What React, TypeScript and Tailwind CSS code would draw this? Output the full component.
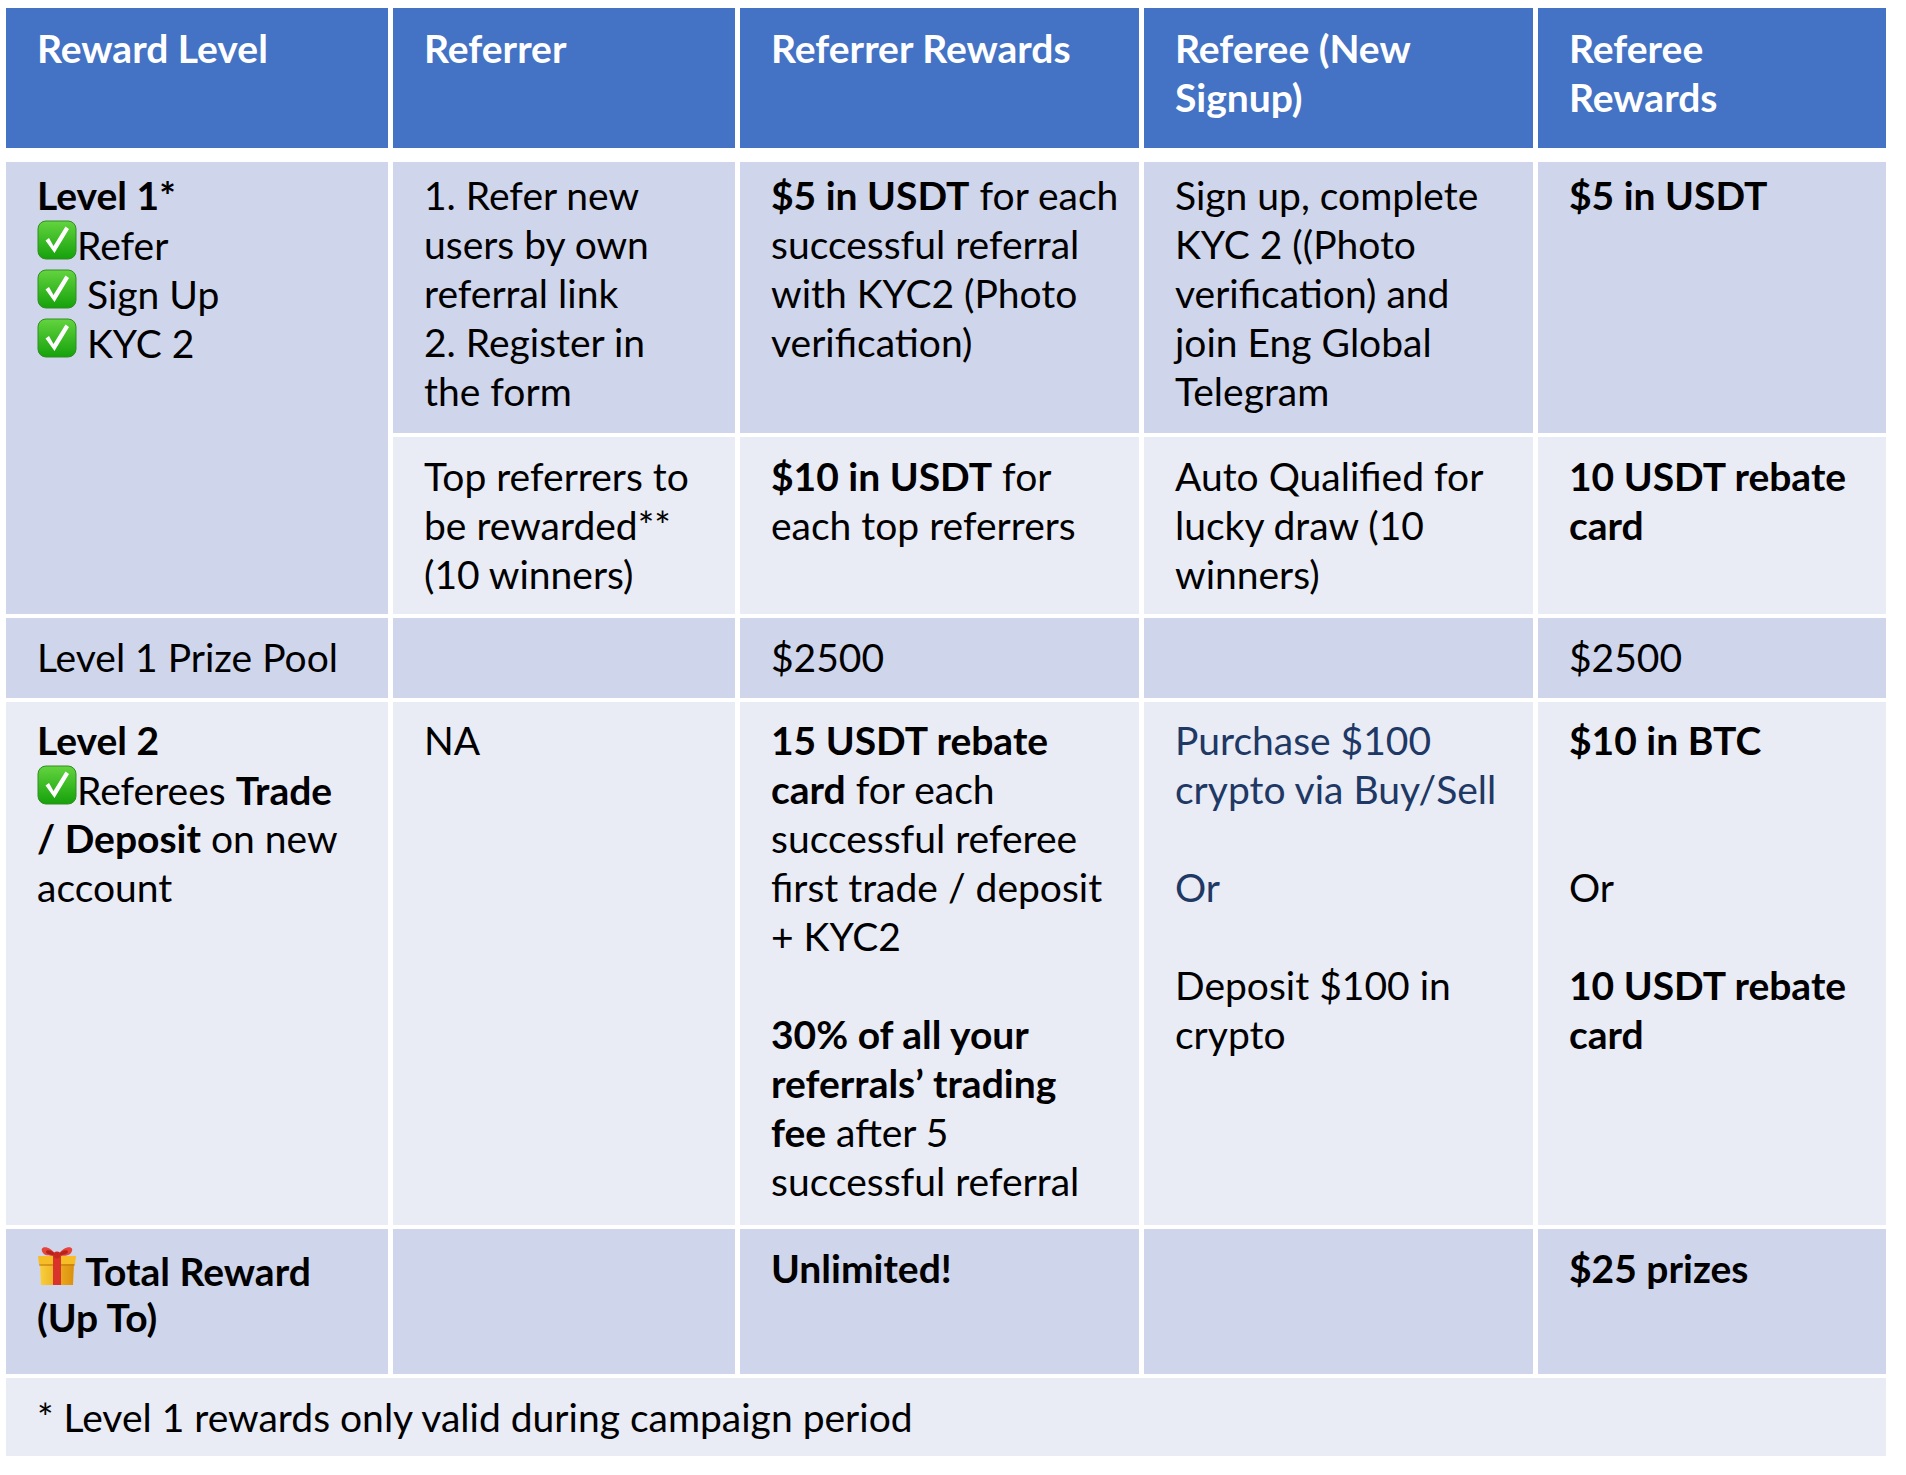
import React from "react";

const Check = () => (
  <svg width="40" height="40" viewBox="0 0 40 40" className="inline-block align-baseline">
    <defs>
      <linearGradient id="gck" x1="0" y1="0" x2="0" y2="1">
        <stop offset="0" stopColor="#63d43f" />
        <stop offset="1" stopColor="#15a10b" />
      </linearGradient>
    </defs>
    <rect x="1" y="1" width="38" height="38" rx="8" fill="url(#gck)" stroke="#2f8f1f" strokeWidth="1" />
    <path d="M8.5 20.5 L12 18 L16.5 26 L28.5 6.5 L32 9 L17.5 33 Z" fill="#ffffff" />
  </svg>
);

const Gift = () => (
  <svg width="40" height="42" viewBox="0 0 40 42" className="inline-block align-baseline">
    <defs>
      <linearGradient id="ggb" x1="0" y1="0" x2="1" y2="0">
        <stop offset="0" stopColor="#f9cf3a" />
        <stop offset="1" stopColor="#dd8f0c" />
      </linearGradient>
    </defs>
    <path d="M3 19 L37 19 L36 41 L4 41 Z" fill="url(#ggb)" />
    <path d="M1 12 L39 12 L38 20 L2 20 Z" fill="#f6bd27" />
    <path d="M2 20 L38 20 L37.6 22 L2.4 22 Z" fill="#c47a0a" opacity="0.6" />
    <rect x="16" y="12" width="8" height="29" fill="#d8342b" />
    <path d="M20 12 C12 0 1 2 6 9 C8 12 14 12 20 12 Z" fill="#e4443a" />
    <path d="M20 12 C28 0 39 2 34 9 C32 12 26 12 20 12 Z" fill="#e4443a" />
    <path d="M20 12 C16 6 9 5 9 8 C9 10 14 11 20 12 Z" fill="#b8221b" />
    <path d="M20 12 C24 6 31 5 31 8 C31 10 26 11 20 12 Z" fill="#b8221b" />
    <circle cx="20" cy="11" r="3.4" fill="#c9281f" />
  </svg>
);

type Line = React.ReactNode;

const Cell = ({ bg, pt, lines, extra }: { bg: string; pt: string; lines: Line[]; extra?: string }) => (
  <div className={`${bg} ${pt} pl-[31px] ${extra ?? ""}`}>
    {lines.map((l, i) => (
      <div key={i} className="h-[49px] whitespace-nowrap">
        {l === "" ? "\u00a0" : l}
      </div>
    ))}
  </div>
);

const B = ({ children }: { children: React.ReactNode }) => <span className="font-bold">{children}</span>;
const Blue = ({ children }: { children: React.ReactNode }) => <span className="text-[#203864]">{children}</span>;

const D = "bg-[#CFD5EA]";
const L = "bg-[#E9EBF5]";

export default function App() {
  return (
    <div className="min-h-[1475px] w-[1906px] bg-white pl-[6px] pt-[8px] font-['Lato',sans-serif] text-[39px] leading-[49px] text-black">
      <div className="mb-[14px] grid h-[140px] grid-cols-[382px_342px_399px_389px_348px] gap-x-[5px]">
        {[
          ["Reward Level"],
          ["Referrer"],
          ["Referrer Rewards"],
          ["Referee (New", "Signup)"],
          ["Referee", "Rewards"],
        ].map((h, i) => (
          <Cell key={i} bg="bg-[#4472C4]" pt="pt-[16px]" extra="font-bold text-white" lines={h} />
        ))}
      </div>

      <div className="grid grid-cols-[382px_342px_399px_389px_348px] grid-rows-[271px_177px_80px_523px_145px_78px] gap-x-[5px] gap-y-[4px]">
        {/* Row 1a */}
        <Cell
          bg={D}
          pt="pt-[9px]"
          extra="row-span-2"
          lines={[
            <B>Level 1*</B>,
            <>
              <Check />
              Refer
            </>,
            <>
              <Check /> Sign Up
            </>,
            <>
              <Check /> KYC 2
            </>,
          ]}
        />
        <Cell bg={D} pt="pt-[9px]" lines={["1. Refer new", "users by own", "referral link", "2. Register in", "the form"]} />
        <Cell
          bg={D}
          pt="pt-[9px]"
          lines={[
            <>
              <B>$5 in USDT</B> for each
            </>,
            "successful referral",
            "with KYC2 (Photo",
            "verification)",
          ]}
        />
        <Cell
          bg={D}
          pt="pt-[9px]"
          lines={["Sign up, complete", "KYC 2 ((Photo", "verification) and", "join Eng Global", "Telegram"]}
        />
        <Cell bg={D} pt="pt-[9px]" lines={[<B>$5 in USDT</B>]} />

        {/* Row 1b */}
        <Cell bg={L} pt="pt-[15px]" lines={["Top referrers to", "be rewarded**", "(10 winners)"]} />
        <Cell
          bg={L}
          pt="pt-[15px]"
          lines={[
            <>
              <B>$10 in USDT</B> for
            </>,
            "each top referrers",
          ]}
        />
        <Cell bg={L} pt="pt-[15px]" lines={["Auto Qualified for", "lucky draw (10", "winners)"]} />
        <Cell bg={L} pt="pt-[15px]" lines={[<B>10 USDT rebate</B>, <B>card</B>]} />

        {/* Prize pool */}
        <Cell bg={D} pt="pt-[15px]" lines={["Level 1 Prize Pool"]} />
        <Cell bg={D} pt="pt-[15px]" lines={[]} />
        <Cell bg={D} pt="pt-[15px]" lines={["$2500"]} />
        <Cell bg={D} pt="pt-[15px]" lines={[]} />
        <Cell bg={D} pt="pt-[15px]" lines={["$2500"]} />

        {/* Level 2 */}
        <Cell
          bg={L}
          pt="pt-[14px]"
          lines={[
            <B>Level 2</B>,
            <>
              <Check />
              Referees <B>Trade</B>
            </>,
            <>
              <B>/ Deposit</B> on new
            </>,
            "account",
          ]}
        />
        <Cell bg={L} pt="pt-[14px]" lines={["NA"]} />
        <Cell
          bg={L}
          pt="pt-[14px]"
          lines={[
            <B>15 USDT rebate</B>,
            <>
              <B>card</B> for each
            </>,
            "successful referee",
            "first trade / deposit",
            "+ KYC2",
            "",
            <B>30% of all your</B>,
            <B>referrals’ trading</B>,
            <>
              <B>fee</B> after 5
            </>,
            "successful referral",
          ]}
        />
        <Cell
          bg={L}
          pt="pt-[14px]"
          lines={[
            <Blue>Purchase $100</Blue>,
            <Blue>crypto via Buy/Sell</Blue>,
            "",
            <Blue>Or</Blue>,
            "",
            "Deposit $100 in",
            "crypto",
          ]}
        />
        <Cell
          bg={L}
          pt="pt-[14px]"
          lines={[<B>$10 in BTC</B>, "", "", "Or", "", <B>10 USDT rebate</B>, <B>card</B>]}
        />

        {/* Total */}
        <Cell
          bg={D}
          pt="pt-[15px]"
          lines={[
            <B>
              <Gift /> Total Reward
            </B>,
            <B>(Up To)</B>,
          ]}
        />
        <Cell bg={D} pt="pt-[15px]" lines={[]} />
        <Cell bg={D} pt="pt-[15px]" lines={[<B>Unlimited!</B>]} />
        <Cell bg={D} pt="pt-[15px]" lines={[]} />
        <Cell bg={D} pt="pt-[15px]" lines={[<B>$25 prizes</B>]} />

        {/* Footer */}
        <Cell bg={L} pt="pt-[15px]" extra="col-span-5" lines={["* Level 1 rewards only valid during campaign period"]} />
      </div>
    </div>
  );
}
